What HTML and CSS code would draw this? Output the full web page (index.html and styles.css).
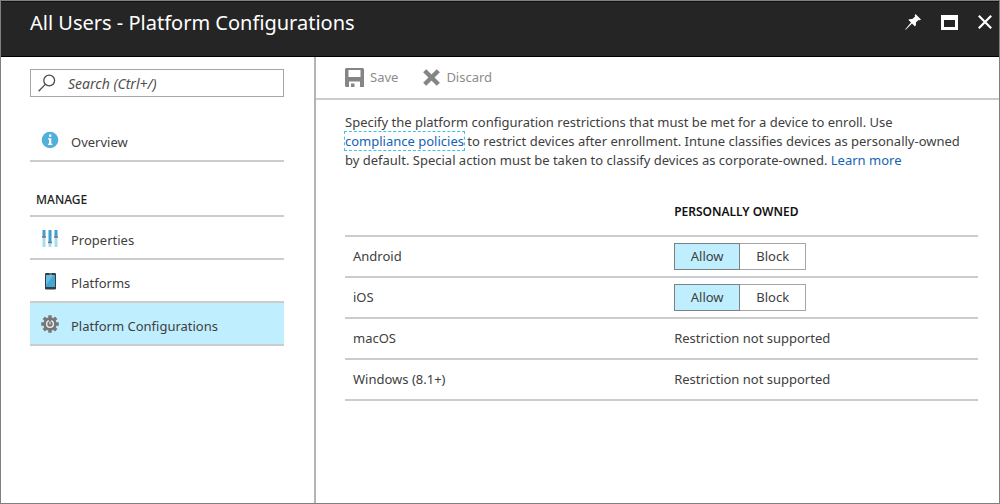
FILE: index.html
```html
<!DOCTYPE html>
<html lang="en">
<head>
<meta charset="utf-8">
<meta name="viewport" content="width=device-width, initial-scale=1">
<title>All Users - Platform Configurations</title>
<link rel="stylesheet" href="styles.css">
</head>
<body>
<div class="blade">
  <header class="blade-header">
    <h1 class="blade-title">All Users - Platform Configurations</h1>
    <div class="window-actions">
      <button class="icon-button" type="button" aria-label="Pin">
        <svg width="16" height="16" viewBox="0 0 16 16" fill="#fff"><path d="M10.500 0 16 5.400 14.600 6.200 13.600 5.900 10.900 8.600Q11.400 10.900 10 12.500L7 9.500 1 15.500.200 15.700.500 14.900 6 8.500 3.300 5.800Q5.200 4.600 7.300 5.100L10.100 2.400 9.700 1.200Z"/></svg>
      </button>
      <button class="icon-button" type="button" aria-label="Maximize">
        <svg width="17" height="15" viewBox="0 0 17 15"><path fill="#fff" fill-rule="evenodd" d="M0 0H17V15H0ZM3 5V12H14V5Z"/></svg>
      </button>
      <button class="icon-button" type="button" aria-label="Close">
        <svg width="14" height="14" viewBox="0 0 14 14" fill="none" stroke="#fff" stroke-width="2.200"><path d="M.800.800 13.200 13.200M13.200.800.800 13.200"/></svg>
      </button>
    </div>
  </header>
  <div class="blade-body">
    <nav class="sidebar" aria-label="Settings">
      <label class="search">
        <svg width="18" height="18" viewBox="0 0 18 18" fill="none" stroke="#4a4a4a" stroke-width="1.300"><circle cx="11.200" cy="6.500" r="5.400"/><path d="M7.300 10.400.600 17.200"/></svg>
        <input class="search-input" type="search" placeholder="Search (Ctrl+/)" aria-label="Search">
      </label>
      <a class="nav-item" href="#overview">
        <svg class="nav-icon" width="18" height="18" viewBox="0 0 18 18"><circle cx="9" cy="9" r="8.300" fill="#50b0da"/><path fill="#fff" d="M8 3.600h2.300v2.200H8ZM7 7.300h3.300v5.500h1v1.200H6.900v-1.200H8V8.500H7Z"/></svg>
        <span>Overview</span>
      </a>
      <h2 class="nav-heading">MANAGE</h2>
      <a class="nav-item" href="#properties">
        <svg class="nav-icon" width="18" height="18" viewBox="0 0 18 18"><path fill="#a9dcf0" d="M1.500 8h3v10h-3ZM7.500 13h3v5h-3ZM13.500 8h3v10h-3Z"/><path fill="#3f9fcd" d="M1.500 1h3v7h-3ZM7.500 1h3v12h-3ZM13.500 1h3v7h-3Z"/><path fill="#777" d="M1 7.200h4v1.500H1ZM7 12.800h4v1.500H7ZM13 7.200h4v1.500h-4Z"/></svg>
        <span>Properties</span>
      </a>
      <a class="nav-item" href="#platforms">
        <svg class="nav-icon" width="18" height="18" viewBox="0 0 18 18"><rect x="4" y="1" width="11" height="16.500" rx="1.200" fill="#333b43"/><path fill="#42a5d2" d="M5 3h9v12H5Z"/><path fill="#69bce0" d="M5 3h8L5 13Z"/><path stroke="#999" d="M8 2h3"/></svg>
        <span>Platforms</span>
      </a>
      <a class="nav-item nav-item-active" href="#platform-configurations" aria-current="page">
        <svg class="nav-icon" width="18" height="18" viewBox="0 0 18 18"><g stroke="#777" stroke-width="3.400"><path d="M9 .200V17.800M.200 9H17.800M2.800 2.800 15.200 15.200M15.200 2.800 2.800 15.200"/></g><circle cx="9" cy="9" r="6.700" fill="#777"/><circle cx="9" cy="9" r="4" fill="#f3f3f3"/><circle cx="9" cy="9" r="2.700" fill="#777"/><path stroke="#777" stroke-width="2.200" d="M9 4v5"/><path stroke="#eee" d="M9 6.500v3"/></svg>
        <span>Platform Configurations</span>
      </a>
    </nav>
    <main class="content">
      <div class="toolbar">
        <button class="command" type="button" disabled>
          <svg width="19" height="19" viewBox="0 0 19 19"><path fill="#858585" fill-rule="evenodd" d="M1 0H18L19 1V19H15V13.500H4V19H1L0 18V1ZM3.500 2V9H15.500V2Z"/><path fill="#858585" d="M6 15.500h3.500V19H6Z"/></svg>
          <span>Save</span>
        </button>
        <button class="command" type="button" disabled>
          <svg width="17" height="17" viewBox="0 0 17 17" fill="none" stroke="#858585" stroke-width="4.400"><path d="M1.700 1.700 15.300 15.300M15.300 1.700 1.700 15.300"/></svg>
          <span>Discard</span>
        </button>
      </div>
      <div class="details">
        <p class="description">Specify the platform configuration restrictions that must be met for a device to enroll. Use<br><a class="link link-focus" href="#compliance">compliance policies</a> to restrict devices after enrollment. Intune classifies devices as personally-owned<br>by default. Special action must be taken to classify devices as corporate-owned. <a class="link" href="#learn">Learn more</a></p>
        <table class="platforms">
          <thead>
            <tr><td></td><th scope="col">PERSONALLY OWNED</th></tr>
          </thead>
          <tbody>
            <tr>
              <th scope="row">Android</th>
              <td><div class="toggle" role="group" aria-label="Android"><button class="option option-on" type="button" aria-pressed="true">Allow</button><button class="option" type="button" aria-pressed="false">Block</button></div></td>
            </tr>
            <tr>
              <th scope="row">iOS</th>
              <td><div class="toggle" role="group" aria-label="iOS"><button class="option option-on" type="button" aria-pressed="true">Allow</button><button class="option" type="button" aria-pressed="false">Block</button></div></td>
            </tr>
            <tr><th scope="row">macOS</th><td>Restriction not supported</td></tr>
            <tr><th scope="row">Windows (8.1+)</th><td>Restriction not supported</td></tr>
          </tbody>
        </table>
      </div>
    </main>
  </div>
</div>
</body>
</html>
```

FILE: styles.css
```css
*, *::before, *::after { box-sizing: border-box; }

body {
  margin: 0;
  background: #fff;
  color: #404040;
  font-family: "Noto Sans", "Open Sans", sans-serif;
  font-size: 13px;
  line-height: 19px;
}

button, input { font: inherit; color: inherit; }

.blade {
  display: flex;
  flex-direction: column;
  min-height: 100vh;
  border: 1px solid #808080;
}

.blade-header {
  display: flex;
  align-items: flex-start;
  justify-content: space-between;
  height: 56px;
  padding: 8px 7px 0 29px;
  background: #252525;
  border-top: 1px solid #111;
  border-bottom: 1px solid #000;
  color: #fff;
}

.blade-title {
  margin: 0;
  font-size: 20px;
  font-weight: 400;
  line-height: 26px;
}

.window-actions {
  display: flex;
  align-items: center;
  gap: 20px;
  height: 24px;
}

.icon-button {
  display: flex;
  padding: 0;
  border: 0;
  background: none;
}

.blade-body { display: flex; flex: 1; }

.sidebar {
  flex: none;
  width: 315px;
  padding: 12px 30px 0 29px;
  border-right: 2px solid #b4b4b4;
}

.search {
  display: flex;
  align-items: center;
  gap: 12px;
  height: 28px;
  margin-bottom: 22px;
  padding: 0 7px;
  border: 1px solid #a6a6a6;
}

.search-input {
  flex: 1;
  min-width: 0;
  padding: 0;
  border: 0;
  outline: 0;
  background: none;
  font-size: 14px;
  font-style: italic;
}

.search-input::placeholder { color: #505050; opacity: 1; }

.nav-item {
  display: flex;
  align-items: center;
  gap: 12px;
  min-height: 43px;
  padding: 5px 11px 0;
  border-bottom: 2px solid #ccc;
  color: #404040;
  text-decoration: none;
}

.nav-icon { flex: none; margin-bottom: 4px; }

.nav-item-active { background: #bfeffe; }

.nav-heading {
  margin: 0;
  padding: 28px 6px 6px;
  border-bottom: 2px solid #ccc;
  color: #222;
  font-size: 12px;
  font-weight: 500;
  line-height: 19px;
}

.content { flex: 1; min-width: 0; }

.toolbar {
  display: flex;
  align-items: center;
  gap: 25px;
  height: 43px;
  padding-left: 29px;
  border-bottom: 2px solid #ccc;
}

.command {
  display: flex;
  align-items: center;
  gap: 6px;
  padding: 0;
  border: 0;
  background: none;
  color: #8c8c8c;
}

.details { padding: 13px 21px 0 29px; }

.description { margin: 0; }

.link { color: #1463b5; text-decoration: none; }

.link-focus { outline: 1px dashed #3fc0ee; }

.platforms {
  width: 100%;
  margin-top: 18px;
  border-collapse: collapse;
  table-layout: fixed;
}

.platforms th, .platforms td {
  height: 41px;
  padding: 0;
  border-bottom: 2px solid #ccc;
  font-weight: 400;
  text-align: left;
}

.platforms tbody th { padding-left: 8px; }

.platforms tr > :first-child { width: 52%; }

.platforms thead th, .platforms thead td {
  height: 48px;
  color: #111;
  font-size: 12px;
  font-weight: 600;
}

.toggle { display: flex; }

.option {
  width: 66px;
  height: 27px;
  padding: 0;
  border: 1px solid #a6a6a6;
  background: #fff;
}

.option + .option { border-left: 0; }

.option-on { border-color: #7c8184; background: #bfeffe; }
```
